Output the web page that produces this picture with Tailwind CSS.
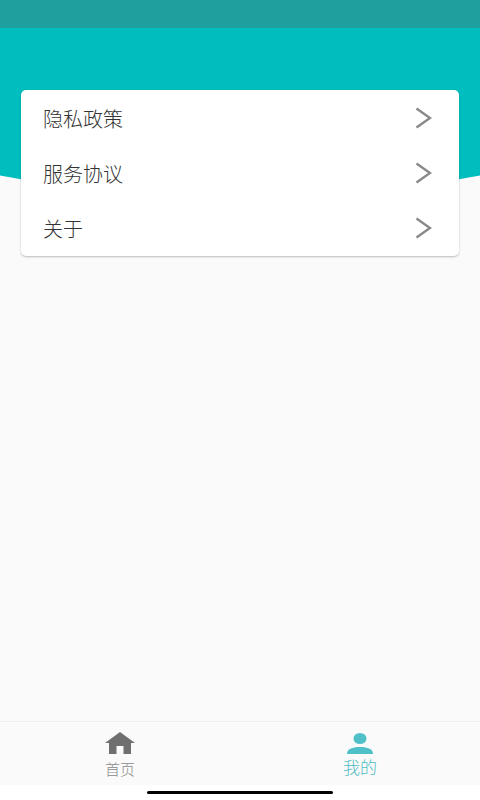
<!DOCTYPE html>
<html lang="zh">
<head>
<meta charset="utf-8">
<script src="https://cdn.jsdelivr.net/npm/@tailwindcss/browser@4"></script>
<title>我的</title>
</head>
<body class="bg-white">
<div class="relative flex h-[800px] w-[480px] flex-col overflow-hidden bg-[#fafafa] font-['Noto_Sans_CJK_SC','Noto_Sans',sans-serif]">
  <div class="h-[28px] shrink-0 bg-[#1fa09f]"></div>
  <div class="h-[172px] shrink-0 bg-[#00bebe] [clip-path:circle(1290px_at_50%_-1120px)]"></div>
  <main class="relative z-10 mx-[21px] -mt-[110px] flex h-[166px] shrink-0 flex-col rounded-[5px] bg-white shadow-[0_1px_2px_rgba(0,0,0,0.25)]">
    <div class="flex h-[55px] items-center justify-between pr-[27px] pl-[22px]">
      <span class="relative top-[1px] text-[20px] leading-none font-light text-[#333]">隐私政策</span>
      <svg class="h-[22px] w-[17px]" viewBox="0 0 17 22" fill="none" stroke="#8a8a8a" stroke-width="2.500"><path d="M1.500 1.500 15 11 1.500 20.500"/></svg>
    </div>
    <div class="flex h-[55px] items-center justify-between pr-[27px] pl-[22px]">
      <span class="relative top-[1px] text-[20px] leading-none font-light text-[#333]">服务协议</span>
      <svg class="h-[22px] w-[17px]" viewBox="0 0 17 22" fill="none" stroke="#8a8a8a" stroke-width="2.500"><path d="M1.500 1.500 15 11 1.500 20.500"/></svg>
    </div>
    <div class="flex h-[55px] items-center justify-between pr-[27px] pl-[22px]">
      <span class="relative top-[1px] text-[20px] leading-none font-light text-[#333]">关于</span>
      <svg class="h-[22px] w-[17px]" viewBox="0 0 17 22" fill="none" stroke="#8a8a8a" stroke-width="2.500"><path d="M1.500 1.500 15 11 1.500 20.500"/></svg>
    </div>
  </main>
  <div class="flex-1"></div>
  <nav class="flex h-[64px] shrink-0 border-t border-[#f0f0f0] bg-[#fafafa]">
    <div class="flex flex-1 flex-col items-center pt-[10px]">
      <svg class="h-[22px] w-[30px]" viewBox="0 0 30 22" fill="#6f6f6f"><path d="M15 0 0 11h4v11h7.500v-8h7v8H26V11h4z"/></svg>
      <span class="mt-[6px] text-[15px] leading-[18px] font-light text-[#8a8a8a]">首页</span>
    </div>
    <div class="flex flex-1 flex-col items-center pt-[11px]">
      <svg class="h-[21px] w-[26px]" viewBox="0 0 26 21" fill="#4fc0c8"><ellipse cx="13" cy="5.500" rx="6.500" ry="5.500"/><path d="M0 21c0-5 5-7 13-7s13 2 13 7z"/></svg>
      <span class="mt-[2px] text-[17px] leading-[22px] font-light text-[#4fbcc2]">我的</span>
    </div>
  </nav>
  <div class="h-[15px] shrink-0 bg-white"></div>
  <div class="absolute bottom-[6px] left-[147px] h-[3px] w-[186px] rounded-full bg-black"></div>
</div>
</body>
</html>
